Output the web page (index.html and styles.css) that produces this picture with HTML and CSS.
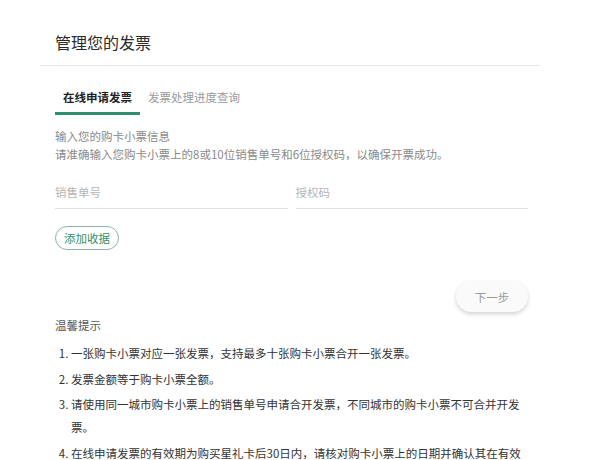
FILE: index.html
```html
<!DOCTYPE html>
<html lang="zh-CN">
<head>
    <meta charset="UTF-8">
    <meta name="viewport" content="width=device-width, initial-scale=1.0">
    <title>管理您的发票</title>
    <link rel="stylesheet" href="styles.css">
</head>
<body>
    <div class="page">
        <div class="page-header">
            <h1>管理您的发票</h1>
        </div>
        <div class="content">
            <div class="tabs">
                <div class="tab active">在线申请发票</div>
                <div class="tab">发票处理进度查询</div>
            </div>
            <div class="intro">
                <p>输入您的购卡小票信息</p>
                <p>请准确输入您购卡小票上的8或10位销售单号和6位授权码，以确保开票成功。</p>
            </div>
            <div class="fields">
                <input type="text" placeholder="销售单号" />
                <input type="text" placeholder="授权码" />
            </div>
            <button class="add-btn">添加收据</button>
            <div class="actions">
                <button class="next-btn">下一步</button>
            </div>
            <div class="tips">
                <h3>温馨提示</h3>
                <ol>
                    <li>一张购卡小票对应一张发票，支持最多十张购卡小票合开一张发票。</li>
                    <li>发票金额等于购卡小票全额。</li>
                    <li>请使用同一城市购卡小票上的销售单号申请合开发票，不同城市的购卡小票不可合并开发票。</li>
                    <li>在线申请发票的有效期为购买星礼卡后30日内，请核对购卡小票上的日期并确认其在有效期内。</li>
                </ol>
            </div>
        </div>
    </div>
</body>
</html>
```

FILE: styles.css
```css
body {
    font-family: "Noto Sans CJK SC", "Noto Sans", sans-serif;
    background-color: white;
    color: #333;
    margin: 0;
}
.page {
    width: 500px;
    margin-left: 40px;
}
.page-header {
    height: 65px;
    border-bottom: 1px solid #e6e6e6;
    display: flex;
    align-items: center;
    padding-left: 15px;
}
.page-header h1 {
    font-size: 16px;
    font-weight: normal;
    color: #2a2a2a;
    margin: 0;
    padding-top: 19px;
    line-height: 20px;
}
.content {
    padding: 0 12px 0 15px;
}
.tabs {
    display: flex;
    margin-top: 21px;
}
.tab {
    font-size: 11.5px;
    line-height: 20px;
    padding: 0 8px 5px;
    color: #9a9a9a;
    border-bottom: 3px solid transparent;
}
.tab.active {
    color: #222;
    font-weight: bold;
    border-bottom-color: #2f8f6c;
}
.intro {
    margin-top: 12px;
    font-size: 11.5px;
    color: #8a8a8a;
}
.intro p {
    margin: 0;
    line-height: 18px;
}
.fields {
    display: flex;
    gap: 8px;
    margin-top: 13px;
}
.fields input {
    flex: 1;
    border: none;
    border-bottom: 1px solid #e3e3e3;
    font-family: inherit;
    font-size: 11.5px;
    padding: 8px 0 8px;
    outline: none;
}
.fields input::placeholder {
    color: #b5b5b5;
}
.add-btn {
    margin-top: 17px;
    font-family: inherit;
    font-size: 11.5px;
    color: #2f8f6c;
    background-color: white;
    border: 1px solid #8fb5a5;
    border-radius: 12px;
    padding: 2px 8px;
    line-height: 18px;
    cursor: pointer;
}
.actions {
    display: flex;
    justify-content: flex-end;
    margin-top: 31px;
}
.next-btn {
    font-family: inherit;
    font-size: 11.5px;
    color: #999;
    background-color: #fafafa;
    border: none;
    border-radius: 16px;
    width: 72px;
    height: 31px;
    box-shadow: 0 2px 4px rgba(0, 0, 0, 0.18);
    cursor: pointer;
}
.tips h3 {
    font-size: 11.5px;
    font-weight: normal;
    color: #555;
    margin: 3px 0 0;
    line-height: 20px;
}
.tips ol {
    margin: 7px 0 0;
    padding-left: 16px;
    font-size: 11.5px;
    color: #333;
}
.tips li {
    line-height: 23px;
    margin-bottom: 2.5px;
}
```
